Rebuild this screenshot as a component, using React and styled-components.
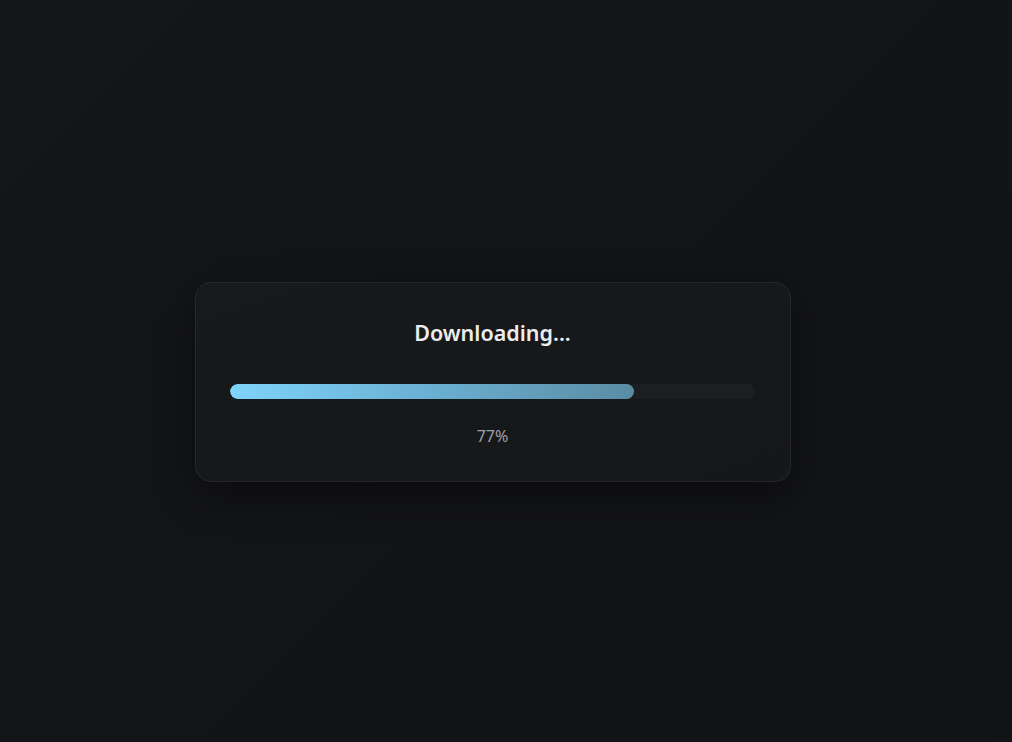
import styled, { createGlobalStyle } from "styled-components";

const GlobalStyle = createGlobalStyle`
  html, body {
    margin: 0;
    padding: 0;
    height: 100%;
  }
  body {
    background: linear-gradient(135deg, #151618 0%, #131416 50%, #121315 100%);
    font-family: "Noto Sans", "Open Sans", sans-serif;
  }
  #root {
    min-height: 100vh;
  }
`;

const Page = styled.div`
  width: 100%;
  height: 742px;
  display: flex;
  align-items: center;
  justify-content: center;
  padding: 21px 26px 0 0;
  box-sizing: border-box;
`;

const Card = styled.div`
  width: 596px;
  box-sizing: border-box;
  padding: 36px 35px 35px 34px;
  background: linear-gradient(160deg, #18191b 0%, #161719 100%);
  border: 1px solid #26272a;
  border-radius: 16px;
  box-shadow: 0 12px 40px rgba(0, 0, 0, 0.45);
  display: flex;
  flex-direction: column;
  align-items: stretch;
`;

const Title = styled.h2`
  margin: 0;
  text-align: center;
  font-size: 21.5px;
  line-height: 28px;
  font-weight: 600;
  color: #ececee;
`;

const Track = styled.div`
  margin-top: 37px;
  height: 15px;
  border-radius: 8px;
  background: #1d1e21;
  overflow: hidden;
`;

const Fill = styled.div`
  height: 100%;
  border-radius: 8px;
  background: linear-gradient(90deg, #7fd3f9 0%, #6cb3d6 45%, #5a8ca3 100%);
`;

const Percent = styled.div`
  margin-top: 27px;
  text-align: center;
  font-size: 16px;
  line-height: 20px;
  color: #a0a1a4;
`;

const progress = 77;

export default function App() {
  return (
    <>
      <GlobalStyle />
      <Page>
        <Card>
          <Title>Downloading...</Title>
          <Track>
            <Fill style={{ width: `${progress}%` }} />
          </Track>
          <Percent>{progress}%</Percent>
        </Card>
      </Page>
    </>
  );
}
